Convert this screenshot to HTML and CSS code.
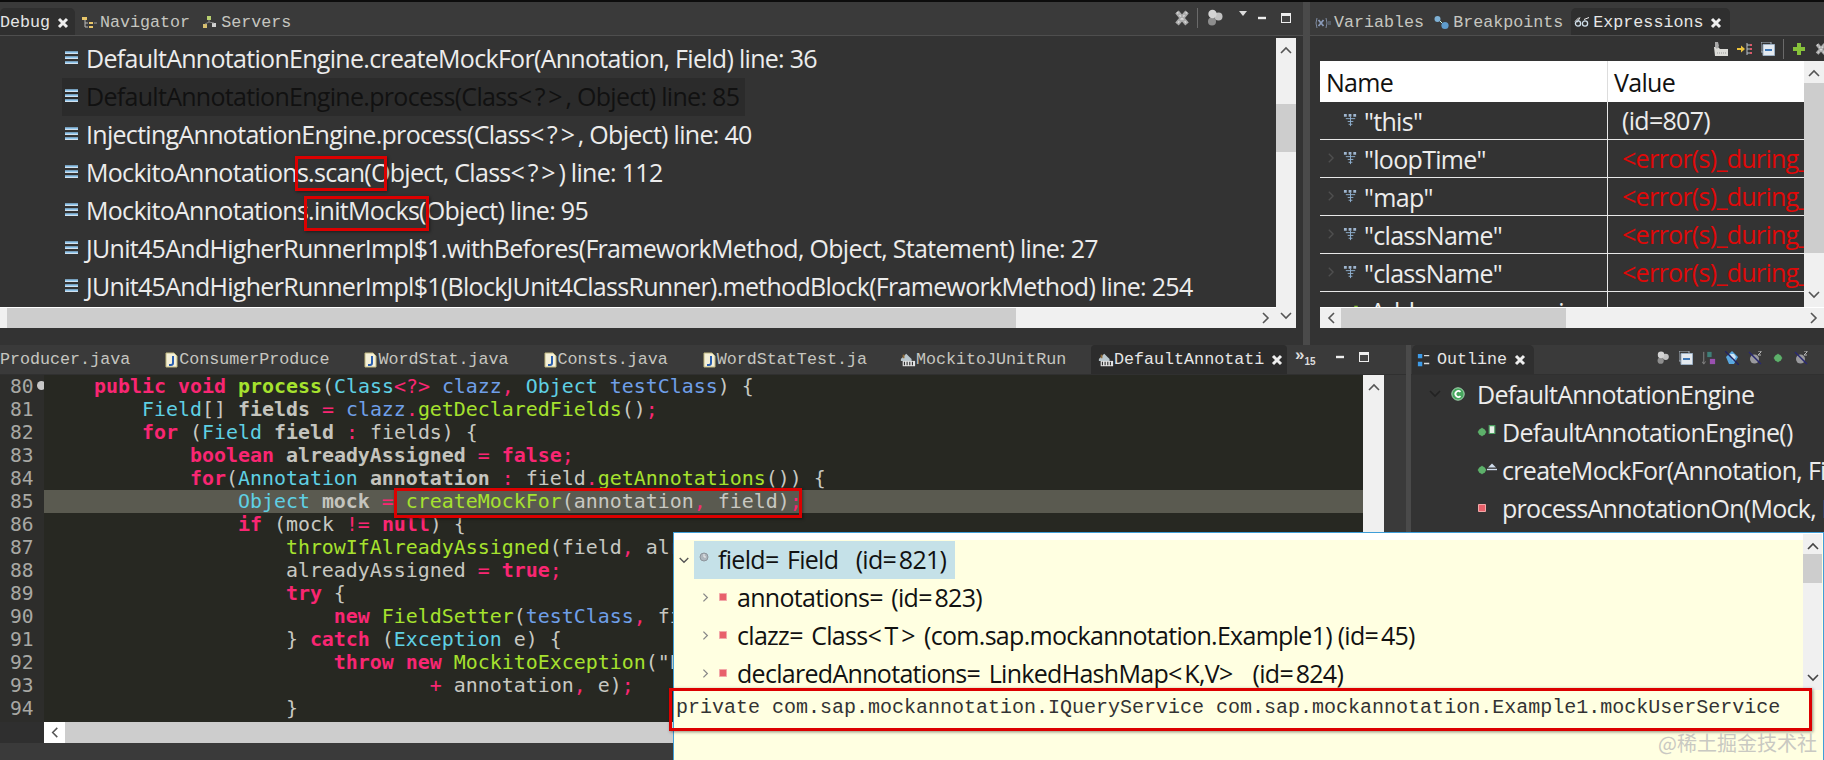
FILE: index.html
```html
<!DOCTYPE html>
<html lang="en">
<head>
<meta charset="utf-8">
<title>Eclipse Debug</title>
<link rel="stylesheet" href="styles.css">
</head>
<body>
<svg class="defs" width="0" height="0" aria-hidden="true">
  <symbol id="i-frame" viewBox="0 0 14 14"><path d="M0 1.5h13M0 6.5h13M0 11.5h13" stroke="#8fc4ea" stroke-width="2.4"/><path d="M0 2.5h13M0 7.5h13M0 12.5h13" stroke="#e8f3fb" stroke-width="0.8"/></symbol>
  <symbol id="i-close" viewBox="0 0 12 12"><path d="M2 2l8 8M10 2l-8 8" stroke="#eee" stroke-width="3"/></symbol>
  <symbol id="i-nav" viewBox="0 0 16 14"><path d="M1 1h5v3H1z" fill="#e8c66a"/><path d="M4 4v7h3M4 7h3" stroke="#bbb" fill="none"/><path d="M8 6h4v2H8z" fill="#e8c66a"/><path d="M8 10h4v2H8z" fill="#e8c66a"/><path d="M13 7h3" stroke="#999"/></symbol>
  <symbol id="i-srv" viewBox="0 0 16 14"><path d="M5 0h4v4H5z" fill="#b8d070"/><path d="M1 8h4v4H1z" fill="#d8c070"/><path d="M10 7h4v4h-4z" fill="#d0d0d0"/><path d="M7 4v2M3 8l4-2 5 1" stroke="#888" fill="none"/></symbol>
  <symbol id="i-var" viewBox="0 0 16 12"><path d="M2 1Q0 6 2 11M11 1q2 5 0 10" stroke="#7e8aa0" fill="none"/><path d="M3.5 3l5 6M8.5 3l-5 6" stroke="#8a9ab8" stroke-width="1.8"/><path d="M13 5h3M13 7h3" stroke="#6f7f90"/></symbol>
  <symbol id="i-bp" viewBox="0 0 16 14"><path d="M4 3l7 7" stroke="#cfe" stroke-width="1"/><circle cx="3.5" cy="3" r="3" fill="#7eb0d4"/><circle cx="11" cy="9.5" r="3.6" fill="#5f9ccc"/></symbol>
  <symbol id="i-exp" viewBox="0 0 16 13"><path d="M1 5l4-4M6 1L3 6M10 3l5-2" stroke="#eee" fill="none"/><circle cx="4" cy="7" r="2.6" fill="none" stroke="#cfe0ec" stroke-width="1.3"/><circle cx="11" cy="7" r="2.6" fill="none" stroke="#cfe0ec" stroke-width="1.3"/></symbol>
  <symbol id="i-java" viewBox="0 0 14 16"><path d="M2 1h8l3 3v11H2z" fill="#f4f0d8" stroke="#c0b880"/><path d="M9 4v7q0 2-2 2H5" stroke="#2a5fb0" stroke-width="2" fill="none"/></symbol>
  <symbol id="i-cls" viewBox="0 0 18 16"><path d="M1 7l6-6 6 6v2H1z" fill="#b9c6cc"/><path d="M3 2h2v4H3z" fill="#8d6a3a"/><path d="M3 9h14v6H3z" fill="#e4e4e4"/><path d="M5 10v4M8 10v4M11 10v4M14 10v4" stroke="#333" stroke-width="1.3"/></symbol>
  <symbol id="i-evar" viewBox="0 0 16 16"><path d="M1 1h3v3H1zM6 1h3v3H6zM11 1h3v3h-3z" fill="#9fb6d0"/><path d="M3 6h10M8 4v10M5 9h6M6 12h4" stroke="#8fb0d0"/></symbol>
  <symbol id="i-chev-r" viewBox="0 0 10 14"><path d="M3 2l5 5-5 5" stroke="currentColor" stroke-width="1.6" fill="none"/></symbol>
  <symbol id="i-chev-d" viewBox="0 0 14 10"><path d="M2 2l5 5 5-5" stroke="currentColor" stroke-width="1.6" fill="none"/></symbol>
  <symbol id="i-chev-u" viewBox="0 0 14 10"><path d="M2 8l5-5 5 5" stroke="currentColor" stroke-width="1.6" fill="none"/></symbol>
  <symbol id="i-chev-l" viewBox="0 0 10 14"><path d="M8 2L3 7l5 5" stroke="currentColor" stroke-width="1.6" fill="none"/></symbol>
  <symbol id="i-tools" viewBox="0 0 16 18"><path d="M3 3l10 12M13 3L3 15" stroke="#ababab" stroke-width="4.5"/><path d="M3 3l10 12M13 3L3 15" stroke="#d8d8d8" stroke-width="1.5" stroke-dasharray="2 2"/></symbol>
  <symbol id="i-pages" viewBox="0 0 16 18"><circle cx="5" cy="12.5" r="4" fill="#8e8e8e"/><circle cx="11.5" cy="7.5" r="4" fill="#c2c2c2"/><circle cx="5.5" cy="5" r="4.2" fill="#d4d4d4"/></symbol>
  <symbol id="i-min" viewBox="0 0 10 4"><path d="M1 2h8" stroke="#eee" stroke-width="2.4"/></symbol>
  <symbol id="i-max" viewBox="0 0 12 12"><path d="M1 1h10v10H1z" fill="#eee"/><path d="M2 4h8v6H2z" fill="#444"/></symbol>
  <symbol id="i-drop" viewBox="0 0 10 6"><path d="M1 0h8L5 5z" fill="#ddd"/></symbol>
  <symbol id="i-add" viewBox="0 0 14 14"><path d="M7 1v12M1 7h12" stroke="#86c23a" stroke-width="4"/></symbol>
  <symbol id="i-collapse" viewBox="0 0 14 14"><path d="M0 0h10v10H0z" fill="none" stroke="#a8b4c0"/><path d="M2 2.5h11.5v11H2z" fill="#e4eaf0" stroke="#9cb0c4"/><path d="M4 8h7" stroke="#2a6ab0" stroke-width="1.8"/></symbol>
  <symbol id="i-arrow" viewBox="0 0 16 14"><path d="M0 7h5" stroke="#ecc43c" stroke-width="2"/><path d="M4 3.5L8 7l-4 3.500z" fill="#ecc43c"/><path d="M10 1v12M10 3h3M10 7h3M10 11h3" stroke="#b8c0c8"/><path d="M13 2h2v2h-2zM13 6h2v2h-2zM13 10h2v2h-2z" fill="#d85a6a"/></symbol>
  <symbol id="i-folder" viewBox="0 0 16 16"><path d="M1 6h4l2 2h8v7H2z" fill="#dcdcd8"/><path d="M2 1h3l1 4-2 3-2-2z" fill="#a8a8a8"/><path d="M4 12h9" stroke="#999" stroke-dasharray="1 1"/></symbol>
  <symbol id="i-outline" viewBox="0 0 14 16"><path d="M0 1h5v5H0zM0 10h5v5H0z" fill="#3d9be8"/><path d="M7 3h6M7 12h6" stroke="#ddd" stroke-width="1.5"/></symbol>
  <symbol id="i-sort" viewBox="0 0 16 16"><path d="M2 1v13M0 12l2 3 2-3" stroke="#8a8a8a" fill="none"/><path d="M6 1h5v6H6z" fill="#3f7f78"/><path d="M9 9h6v6H9z" fill="#9a50b0"/></symbol>
  <symbol id="i-hide" viewBox="0 0 14 14"><path d="M7 0l6 6-4 7H4L1 6z" fill="#5aa8e0"/><path d="M5 3l4 0 2 3-3 4z" fill="#cfe6f6"/><path d="M0 0l14 14" stroke="#202060" stroke-width="1.4"/></symbol>
  <symbol id="i-dotx" viewBox="0 0 14 14"><circle cx="6.500" cy="8" r="4.500" fill="#9a9a9e"/><path d="M1 1l12 12" stroke="#282870" stroke-width="1.5"/><path d="M10 0h3v1l-3 3h3" stroke="#b8b8b8" fill="none"/></symbol>
  <symbol id="i-dot" viewBox="0 0 10 10"><path d="M5 .5L9.500 5 5 9.500.5 5z" fill="#52a060"/><circle cx="5" cy="5" r="3.600" fill="#5db06a"/></symbol>
  <symbol id="i-cbadge" viewBox="0 0 14 14"><circle cx="7" cy="7" r="6.200" fill="#47a65e" stroke="#a8d8b4"/><path d="M9.500 4.800A3 3 0 1 0 9.500 9.200" stroke="#fff" stroke-width="1.800" fill="none"/></symbol>
  <symbol id="i-red" viewBox="0 0 8 8"><path d="M.5.5h7v7h-7z" fill="#e8606a" stroke="#f2a8a8"/></symbol>
  <symbol id="i-tri" viewBox="0 0 10 8"><path d="M5 0l4 4H1z" fill="#cfdcec"/><path d="M0 6h10" stroke="#cfdcec" stroke-width="1.400"/></symbol>
  <symbol id="i-cflag" viewBox="0 0 6 8"><path d="M.5.5h5v7h-5z" fill="#e8f0e8" stroke="#4aa060"/></symbol>
  <symbol id="i-static" viewBox="0 0 10 10"><circle cx="5" cy="5" r="4" fill="#aeb6bd" stroke="#8d959c"/><path d="M5 2v3h2" stroke="#eee" fill="none"/></symbol>
</svg>

<div class="app">
  <div class="top">
    <section class="debug">
      <div class="tabbar">
        <div class="tab active tab-debug"><span>Debug</span><svg class="ic-close"><use href="#i-close"/></svg></div>
        <div class="tab tab-nav"><svg class="ic-tab"><use href="#i-nav"/></svg><span>Navigator</span></div>
        <div class="tab tab-srv"><svg class="ic-tab"><use href="#i-srv"/></svg><span>Servers</span></div>
        <div class="tools tools-debug">
          <svg class="ic-16"><use href="#i-tools"/></svg>
          <i class="sep"></i>
          <svg class="ic-16 dbg-pages"><use href="#i-pages"/></svg>
          <svg class="ic-drop"><use href="#i-drop"/></svg>
          <svg class="ic-min"><use href="#i-min"/></svg>
          <svg class="ic-max dbg-max"><use href="#i-max"/></svg>
        </div>
      </div>
      <div class="debug-body">
        <div class="frames">
          <div class="frame"><svg class="ic-frame"><use href="#i-frame"/></svg><span>DefaultAnnotationEngine.createMockFor(Annotation, Field) line: 36</span></div>
          <div class="frame selected"><svg class="ic-frame"><use href="#i-frame"/></svg><span>DefaultAnnotationEngine.process(Class<span class="ang">&lt;?&gt;</span>, Object) line: 85</span></div>
          <div class="frame"><svg class="ic-frame"><use href="#i-frame"/></svg><span>InjectingAnnotationEngine.process(Class<span class="ang">&lt;?&gt;</span>, Object) line: 40</span></div>
          <div class="frame"><svg class="ic-frame"><use href="#i-frame"/></svg><span>MockitoAnnotations.scan(Object, Class<span class="ang">&lt;?&gt;</span>) line: 112</span></div>
          <div class="frame"><svg class="ic-frame"><use href="#i-frame"/></svg><span>MockitoAnnotations.initMocks(Object) line: 95</span></div>
          <div class="frame"><svg class="ic-frame"><use href="#i-frame"/></svg><span>JUnit45AndHigherRunnerImpl$1.withBefores(FrameworkMethod, Object, Statement) line: 27</span></div>
          <div class="frame"><svg class="ic-frame"><use href="#i-frame"/></svg><span>JUnit45AndHigherRunnerImpl$1(BlockJUnit4ClassRunner).methodBlock(FrameworkMethod) line: 254</span></div>
        </div>
        <div class="vbar vbar-debug">
          <svg class="arrow-v"><use href="#i-chev-u"/></svg>
          <div class="thumb-v thumb-debug"></div>
          <svg class="arrow-v arrow-end"><use href="#i-chev-d"/></svg>
        </div>
        <div class="hbar hbar-debug">
          <div class="thumb-h thumb-debug-h"></div>
          <svg class="arrow-h arrow-end-h"><use href="#i-chev-r"/></svg>
        </div>
      </div>
    </section>

    <section class="exprs">
      <div class="tabbar">
        <div class="tab tab-var"><svg class="ic-tab"><use href="#i-var"/></svg><span>Variables</span></div>
        <div class="tab tab-bp"><svg class="ic-tab"><use href="#i-bp"/></svg><span>Breakpoints</span></div>
        <div class="tab active tab-exp"><svg class="ic-tab"><use href="#i-exp"/></svg><span>Expressions</span><svg class="ic-close"><use href="#i-close"/></svg></div>
      </div>
      <div class="tools tools-exp">
        <svg class="ic-16 exp-tool"><use href="#i-folder"/></svg>
        <svg class="ic-16 exp-tool"><use href="#i-arrow"/></svg>
        <svg class="ic-14"><use href="#i-collapse"/></svg>
        <i class="sep"></i>
        <svg class="ic-14"><use href="#i-add"/></svg>
        <svg class="ic-14"><use href="#i-tools"/></svg>
      </div>
      <div class="expr-body">
        <div class="expr-table">
          <div class="expr-head"><div class="cell-name">Name</div><div class="cell-val">Value</div></div>
          <div class="expr-row"><div class="cell-name"><svg class="ic-evar"><use href="#i-evar"/></svg>"this"</div><div class="cell-val">(id=807)</div></div>
          <div class="expr-row"><div class="cell-name"><svg class="tw"><use href="#i-chev-r"/></svg><svg class="ic-evar"><use href="#i-evar"/></svg>"loopTime"</div><div class="cell-val err">&lt;error(s)_during_the_evaluation&gt;</div></div>
          <div class="expr-row"><div class="cell-name"><svg class="tw"><use href="#i-chev-r"/></svg><svg class="ic-evar"><use href="#i-evar"/></svg>"map"</div><div class="cell-val err">&lt;error(s)_during_the_evaluation&gt;</div></div>
          <div class="expr-row"><div class="cell-name"><svg class="tw"><use href="#i-chev-r"/></svg><svg class="ic-evar"><use href="#i-evar"/></svg>"className"</div><div class="cell-val err">&lt;error(s)_during_the_evaluation&gt;</div></div>
          <div class="expr-row"><div class="cell-name"><svg class="tw"><use href="#i-chev-r"/></svg><svg class="ic-evar"><use href="#i-evar"/></svg>"className"</div><div class="cell-val err">&lt;error(s)_during_the_evaluation&gt;</div></div>
          <div class="expr-row"><div class="cell-name add-row"><svg class="ic-add"><use href="#i-add"/></svg>Add new expression</div><div class="cell-val"></div></div>
        </div>
        <div class="vbar vbar-exp">
          <svg class="arrow-v"><use href="#i-chev-u"/></svg>
          <div class="thumb-v thumb-exp"></div>
          <svg class="arrow-v arrow-end"><use href="#i-chev-d"/></svg>
        </div>
        <div class="hbar hbar-exp">
          <svg class="arrow-h"><use href="#i-chev-l"/></svg>
          <div class="thumb-h thumb-exp-h"></div>
          <svg class="arrow-h arrow-end-h"><use href="#i-chev-r"/></svg>
        </div>
      </div>
    </section>
  </div>

  <div class="bottom">
    <section class="editor">
      <div class="tabbar tabbar-ed">
        <div class="edtabs">
          <div class="edtab"><span>Producer.java</span></div>
          <div class="edtab"><svg class="ic-file"><use href="#i-java"/></svg><span>ConsumerProduce</span></div>
          <div class="edtab"><svg class="ic-file"><use href="#i-java"/></svg><span>WordStat.java</span></div>
          <div class="edtab"><svg class="ic-file"><use href="#i-java"/></svg><span>Consts.java</span></div>
          <div class="edtab"><svg class="ic-file"><use href="#i-java"/></svg><span>WordStatTest.ja</span></div>
          <div class="edtab"><svg class="ic-file"><use href="#i-cls"/></svg><span>MockitoJUnitRun</span></div>
        </div>
        <div class="edtab-active"><svg class="ic-file"><use href="#i-cls"/></svg><span>DefaultAnnotati</span><svg class="ic-close"><use href="#i-close"/></svg></div>
        <div class="more"><span class="more-a">»</span><span class="more-n">15</span></div>
        <div class="tools tools-ed">
          <svg class="ic-min"><use href="#i-min"/></svg>
          <svg class="ic-max"><use href="#i-max"/></svg>
        </div>
      </div>
      <div class="ed-body">
        <div class="gutter">
          <div class="ln">80<i class="fold"></i></div><div class="ln">81</div><div class="ln">82</div><div class="ln">83</div><div class="ln">84</div><div class="ln">85</div><div class="ln">86</div><div class="ln">87</div><div class="ln">88</div><div class="ln">89</div><div class="ln">90</div><div class="ln">91</div><div class="ln">92</div><div class="ln">93</div><div class="ln">94</div>
        </div>
        <div class="code">
<div class="cl">    <b class="k">public</b> <b class="k">void</b> <b class="m">process</b>(<span class="t">Class</span><span class="o">&lt;?&gt;</span> <span class="p">clazz</span><span class="o">,</span> <span class="t">Object</span> <span class="p">testClass</span>) {</div>
<div class="cl">        <span class="t">Field</span>[] <b class="v">fields</b> <span class="o">=</span> <span class="p">clazz</span><span class="o">.</span><span class="m">getDeclaredFields</span>()<span class="o">;</span></div>
<div class="cl">        <b class="k">for</b> (<span class="t">Field</span> <b class="v">field</b> <span class="o">:</span> fields) {</div>
<div class="cl">            <b class="k">boolean</b> <b class="v">alreadyAssigned</b> <span class="o">=</span> <b class="k">false</b><span class="o">;</span></div>
<div class="cl">            <b class="k">for</b>(<span class="t">Annotation</span> <b class="v">annotation</b> <span class="o">:</span> field<span class="o">.</span><span class="m">getAnnotations</span>()) {</div>
<div class="cl cur">                <span class="t">Object</span> <b class="v">mock</b> <span class="o">=</span> <span class="m">createMockFor</span>(annotation<span class="o">,</span> field)<span class="o">;</span></div>
<div class="cl">                <b class="k">if</b> (mock <span class="o">!=</span> <b class="k">null</b>) {</div>
<div class="cl">                    <span class="m">throwIfAlreadyAssigned</span>(field<span class="o">,</span> alreadyAssigned)<span class="o">;</span></div>
<div class="cl">                    alreadyAssigned <span class="o">=</span> <b class="k">true</b><span class="o">;</span></div>
<div class="cl">                    <b class="k">try</b> {</div>
<div class="cl">                        <b class="k">new</b> <span class="m">FieldSetter</span>(<span class="p">testClass</span><span class="o">,</span> field)<span class="o">.</span><span class="m">set</span>(mock)<span class="o">;</span></div>
<div class="cl">                    } <b class="k">catch</b> (<span class="t">Exception</span> e) {</div>
<div class="cl">                        <b class="k">throw</b> <b class="k">new</b> <span class="m">MockitoException</span>("Problems setting field "</div>
<div class="cl">                                <span class="o">+</span> annotation<span class="o">,</span> e)<span class="o">;</span></div>
<div class="cl">                    }</div>
        </div>
        <div class="vbar vbar-ed">
          <svg class="arrow-v"><use href="#i-chev-u"/></svg>
        </div>
        <div class="hbar hbar-ed">
          <svg class="arrow-h"><use href="#i-chev-l"/></svg>
          <div class="thumb-h thumb-ed-h"></div>
        </div>
      </div>
    </section>

    <section class="outline">
      <div class="tabbar tabbar-ed">
        <div class="tab active tab-outline"><svg class="ic-tab"><use href="#i-outline"/></svg><span>Outline</span><svg class="ic-close"><use href="#i-close"/></svg></div>
        <div class="tools tools-out">
          <svg class="ic-14"><use href="#i-pages"/></svg>
          <svg class="ic-14"><use href="#i-collapse"/></svg>
          <svg class="ic-14"><use href="#i-sort"/></svg>
          <svg class="ic-14"><use href="#i-hide"/></svg>
          <svg class="ic-14"><use href="#i-dotx"/></svg>
          <svg class="ic-10 out-dot"><use href="#i-dot"/></svg>
          <svg class="ic-14"><use href="#i-dotx"/></svg>
        </div>
      </div>
      <div class="out-tree">
        <div class="out-row lvl0"><svg class="tw-d"><use href="#i-chev-d"/></svg><svg class="ic-c"><use href="#i-cbadge"/></svg><span>DefaultAnnotationEngine</span></div>
        <div class="out-row lvl1"><svg class="ic-10"><use href="#i-dot"/></svg><svg class="ic-flag"><use href="#i-cflag"/></svg><span>DefaultAnnotationEngine()</span></div>
        <div class="out-row lvl1"><svg class="ic-10"><use href="#i-dot"/></svg><svg class="ic-flag"><use href="#i-tri"/></svg><span>createMockFor(Annotation, Field) : Object</span></div>
        <div class="out-row lvl1"><svg class="ic-red"><use href="#i-red"/></svg><i class="ic-flag"></i><span>processAnnotationOn(Mock, Field)</span></div>
      </div>
    </section>
  </div>

  <aside class="hover">
    <div class="hover-main">
      <div class="hover-tree">
        <div class="h-row h-root"><svg class="h-tw"><use href="#i-chev-d"/></svg><div class="h-sel"><svg class="ic-static"><use href="#i-static"/></svg><span>field<span class="eq">=</span> Field <span class="gap">&nbsp;</span>(id<span class="eq">=</span>821)</span></div></div>
        <div class="h-row h-kid"><svg class="h-twr"><use href="#i-chev-r"/></svg><svg class="ic-red"><use href="#i-red"/></svg><span>annotations<span class="eq">=</span> (id<span class="eq">=</span>823)</span></div>
        <div class="h-row h-kid"><svg class="h-twr"><use href="#i-chev-r"/></svg><svg class="ic-red"><use href="#i-red"/></svg><span>clazz<span class="eq">=</span> Class<span class="ang">&lt;T&gt;</span> (com.sap.mockannotation.Example1) (id<span class="eq">=</span>45)</span></div>
        <div class="h-row h-kid"><svg class="h-twr"><use href="#i-chev-r"/></svg><svg class="ic-red"><use href="#i-red"/></svg><span>declaredAnnotations<span class="eq">=</span> LinkedHashMap<span class="eq">&lt;</span>K,V<span class="eq">&gt;</span> <span class="gap">&nbsp;</span>(id<span class="eq">=</span>824)</span></div>
      </div>
      <div class="vbar vbar-hover">
        <svg class="arrow-v"><use href="#i-chev-u"/></svg>
        <div class="thumb-v thumb-hover"></div>
        <svg class="arrow-v arrow-end"><use href="#i-chev-d"/></svg>
      </div>
    </div>
    <div class="hover-detail">private com.sap.mockannotation.IQueryService com.sap.mockannotation.Example1.mockUserService</div>
  </aside>

  <i class="mark mark-scan"></i>
  <i class="mark mark-init"></i>
  <i class="mark mark-create"></i>
  <i class="mark mark-detail"></i>
  <div class="watermark">@稀土掘金技术社区</div>
</div>
</body>
</html>
```
FILE: styles.css
```css
* { box-sizing: border-box; }
html, body { margin: 0; height: 100%; overflow: hidden; background: #2b2b2b; }
.defs { position: absolute; }
svg { display: block; flex: none; overflow: visible; }

.app {
  position: relative;
  width: 1824px;
  height: 760px;
  overflow: hidden;
  background: #4a4a4a;
  border-top: 2px solid #0c0c0c;
  font-family: "Open Sans", "Noto Sans", sans-serif;
  font-size: 25px;
  letter-spacing: -0.7px;
}
.ang { letter-spacing: 2.8px; }
.eq { letter-spacing: 2px; }
.gap { letter-spacing: 5px; }

/* ---------- regions ---------- */
.top { display: flex; height: 343px; gap: 7px; }
.bottom { display: flex; height: 415px; gap: 5px; }
.debug { width: 1303px; background: #333; display: flex; flex-direction: column; }
.exprs { flex: 1; background: #333; display: flex; flex-direction: column; min-width: 0; }
.editor { width: 1406px; background: #3a3a3a; display: flex; flex-direction: column; }
.outline { flex: 1; background: #333; display: flex; flex-direction: column; min-width: 0; }

/* ---------- tabs ---------- */
.tabbar {
  display: flex; align-items: stretch; height: 34px; flex: none; padding-top: 6px;
  background: #3a3a3a; border-bottom: 1px solid #4e4e4e;
  font-family: "Liberation Mono", monospace; font-size: 16.7px; letter-spacing: 0;
  color: #c6c6c0;
}
.tabbar-ed { height: 30px; padding-top: 0; border-bottom: 1px solid #303030; }
.tab { display: flex; align-items: center; padding-top: 2px; }
.tab.active { background: #2f2f2f; color: #e6e6e6; border-radius: 5px 5px 0 0; }
.ic-tab { width: 16px; height: 14px; margin-right: 3px; }
.ic-close { width: 12px; height: 12px; margin-left: 7px; }
.tab-debug { width: 75px; }
.tab-nav { margin-left: 6px; }
.tab-srv { margin-left: 12px; }
.tab-var { margin-left: 5px; }
.tab-bp { margin-left: 10px; }
.tab-exp { margin-left: 8px; padding: 2px 8px 0 3px; }
.tab-outline { margin-left: 1px; padding: 0 8px 0 4px; }
.tab-outline .ic-tab { margin-right: 5px; }

.edtabs { display: flex; gap: 33px; width: 1091px; overflow: hidden; flex: none; }
.edtab, .edtab-active { display: flex; align-items: center; white-space: nowrap; }
.edtab-active { background: #2c2c2c; color: #e6e6e6; width: 196px; padding-left: 7px; flex: none; border-radius: 4px 4px 0 0; }
.ic-file { width: 16px; height: 16px; }
.edtab-active .ic-close { margin-left: 7px; }
.more { width: 40px; display: flex; padding: 3px 0 0 8px; color: #ddd; font-family: "Liberation Sans", sans-serif; font-size: 15px; font-weight: 700; }
.more-a { font-size: 17px; line-height: 14px; }
.more-n { font-size: 10px; padding-top: 8px; }

/* ---------- toolbars ---------- */
.tools { display: flex; align-items: center; }
.tools-debug { margin-left: auto; gap: 0; padding: 0 11px 8px 0; }
.tools-debug .sep { margin: 0 9px 0 7px; }
.dbg-pages { margin-right: 15px; }
.tools-debug .ic-drop { margin: -8px 9px 0 0; }
.dbg-max { margin-left: 13px; }
.tools-ed { gap: 13px; margin-left: 8px; padding-bottom: 6px; }
.tools-out { margin-left: auto; gap: 9px; padding-right: 16px; padding-bottom: 4px; }
.out-dot { margin: 0 2px; }
.tools-exp { justify-content: flex-end; height: 25px; flex: none; gap: 8px; margin-right: -4px; }
.exp-tool { margin-right: 0; }
.ic-16 { width: 16px; height: 18px; }
.ic-14 { width: 14px; height: 14px; }
.ic-10 { width: 10px; height: 10px; }
.ic-min { width: 10px; height: 4px; }
.ic-max { width: 12px; height: 12px; }
.ic-drop { width: 10px; height: 6px; }
.sep { width: 1px; height: 20px; background: #6a6a6a; }

/* ---------- scrollbars ---------- */
.vbar { background: #f0f0f0; color: #555; display: flex; flex-direction: column; align-items: center; width: 20px; }
.hbar { background: #f0f0f0; color: #555; display: flex; align-items: center; height: 21px; border-top: 1px solid #fff; }
.arrow-v { width: 14px; height: 10px; margin-top: 7px; flex: none; }
.arrow-end { margin: auto 0 7px; }
.arrow-h { width: 10px; height: 14px; margin: 0 6px; }
.arrow-end-h { margin-left: auto; }
.thumb-v { width: 100%; background: #cdcdcd; flex: none; }
.thumb-h { height: 100%; background: #cdcdcd; flex: none; }

/* ---------- debug ---------- */
.debug-body { display: grid; grid-template-columns: 1276px 20px; grid-template-rows: 269px 21px; flex: none; padding-top: 2px; height: 292px; }
.frames { overflow: hidden; padding-top: 2px; color: #ececec; }
.frame { display: flex; align-items: center; height: 38px; width: max-content; padding: 0 6px 2px 3px; margin-left: 62px; white-space: nowrap; }
.frame.selected { background: #2b2b2b; color: #111; }
.ic-frame { width: 14px; height: 14px; margin-right: 7px; }
.vbar-debug { grid-row: 1 / 3; grid-column: 2; height: 290px; }
.thumb-debug { height: 48px; margin-top: 49px; }
.hbar-debug { grid-column: 1; grid-row: 2; }
.thumb-debug-h { width: 1009px; margin-left: 7px; }

/* ---------- expressions ---------- */
.expr-body { display: grid; grid-template-columns: 484px 20px; grid-template-rows: 246px 21px; padding-left: 10px; flex: none; }
.expr-table { overflow: hidden; background: #333; color: #ececec; }
.expr-head, .expr-row { display: grid; grid-template-columns: 288px 196px; white-space: nowrap; }
.expr-head { height: 41px; background: #fff; color: #111; line-height: 43px; }
.expr-head .cell-name { border-right: 1px solid #ddd; padding-left: 6px; }
.expr-head .cell-val { padding-left: 6px; }
.expr-row { height: 38px; border-bottom: 1px solid #e8e8e8; line-height: 36px; }
.expr-row .cell-name { border-right: 1px solid #e8e8e8; display: flex; align-items: center; padding-left: 23px; position: relative; }
.expr-row .cell-val { padding-left: 14px; overflow: hidden; }
.err { color: #e00808; }
.ic-evar { width: 15px; height: 15px; margin-right: 6px; }
.tw { position: absolute; left: 6px; top: 12px; width: 9px; height: 12px; color: #4f4f4f; }
.add-row { padding-left: 30px !important; }
.ic-add { width: 12px; height: 12px; margin-right: 8px; }
.vbar-exp { height: 246px; }
.thumb-exp { height: 170px; margin-top: 5px; }
.hbar-exp { grid-column: 1 / 3; }
.thumb-exp-h { width: 225px; margin-left: -1px; }

/* ---------- editor ---------- */
.ed-body { display: grid; grid-template-columns: 44px 1319px 21px; grid-template-rows: 347px 21px; height: 368px; flex: none; }
.gutter {
  background: #2d2d2b; color: #a8a8a4; padding: 0 0 0 10px; overflow: hidden;
  font-family: "DejaVu Sans Mono", monospace; font-size: 19.6px; letter-spacing: 0; line-height: 23px;
}
.ln { height: 23px; position: relative; }
.fold { position: absolute; left: 27px; top: 6px; width: 9px; height: 9px; border-radius: 50%; background: #c8c8c8; }
.code {
  background: #272822; color: #c8c8c2; overflow: hidden; position: relative;
  font-family: "DejaVu Sans Mono", monospace; font-size: 19.93px; letter-spacing: 0; line-height: 23px;
}
.cl { height: 23px; white-space: pre; padding-left: 2px; }
.cur { background: #5a5a50; }
.k { color: #f92672; }
.m { color: #a6e22e; font-weight: 400; }
b.m { font-weight: 700; }
.t { color: #5fd0e4; }
.p { color: #6f9fe8; }
.o { color: #f92672; }
.v { color: #c4c4be; }
.vbar-ed { width: 21px; grid-column: 3; grid-row: 1 / 3; height: 368px; }
.hbar-ed { grid-column: 1 / 3; grid-row: 2; background: #2f2f2f; padding-left: 44px; border: 0; }
.hbar-ed .arrow-h { width: 21px; background: #fff; height: 100%; padding: 4px 5px; margin: 0; }
.thumb-ed-h { flex: 1; }

/* ---------- outline ---------- */
.out-tree { padding-top: 1px; color: #ececec; white-space: nowrap; overflow: hidden; flex: 1; }
.out-row { display: flex; align-items: center; height: 38px; padding-bottom: 2px; }
.lvl0 { padding-left: 17px; }
.tw-d { width: 14px; height: 10px; color: #222; margin-right: 9px; }
.ic-c { width: 14px; height: 14px; margin-right: 12px; }
.lvl1 { padding-left: 66px; }
.ic-flag { display: block; width: 10px; height: 9px; margin: -6px 5px 0 0; flex: none; }
.ic-red { width: 8px; height: 8px; flex: none; margin-left: 1px; margin-right: 1px; }

/* ---------- hover ---------- */
.hover {
  position: absolute; left: 673px; top: 530px; width: 1151px; height: 230px;
  background: #ffffe1; border: 1px solid #3f9ed8; border-bottom: 0;
  color: #111; display: flex; flex-direction: column;
}
.hover::before { content: ""; display: block; height: 7px; background: #fff; flex: none; }
.hover-main { display: flex; height: 150px; flex: none; }
.hover-tree { flex: 1; white-space: nowrap; overflow: hidden; padding-top: 1px; }
.h-row { display: flex; align-items: center; height: 38px; padding-bottom: 2px; }
.h-tw { width: 12px; height: 9px; margin-left: 4px; margin-right: 4px; color: #555; }
.h-root { padding-bottom: 0; }
.h-sel { display: flex; align-items: center; height: 38px; background: #c5e1e8; padding: 0 9px 2px 5px; }
.ic-static { width: 10px; height: 10px; margin: -4px 9px 0 0; }
.h-twr { width: 8px; height: 11px; color: #888; margin-left: 27px; margin-right: 8px; }
.h-kid .ic-red { margin: 0 10px 0 2px; }
.vbar-hover { width: 19px; color: #444; margin-top: -6px; height: 156px; margin-right: 1px; }
.thumb-hover { height: 29px; margin-top: 3px; }
.hover-detail {
  padding: 6px 0 0 2px; font-family: "Liberation Mono", monospace; font-size: 20px; letter-spacing: 0; color: #333; white-space: nowrap;
}

/* ---------- annotations over the picture ---------- */
.mark { position: absolute; border: 3px solid #dc0000; box-shadow: 1px 1px 3px rgba(0,0,0,.45); pointer-events: none; }
.mark-scan { left: 295px; top: 154px; width: 92px; height: 35px; }
.mark-init { left: 304px; top: 194px; width: 125px; height: 35px; }
.mark-create { left: 394px; top: 486px; width: 408px; height: 30px; }
.mark-detail { left: 669px; top: 686px; width: 1143px; height: 43px; }
.watermark {
  position: absolute; left: 1658px; top: 728px; color: #c9c9c2; font-size: 20px; letter-spacing: 0;
  font-family: "Noto Sans CJK SC", sans-serif; line-height: 26px;
}
```
